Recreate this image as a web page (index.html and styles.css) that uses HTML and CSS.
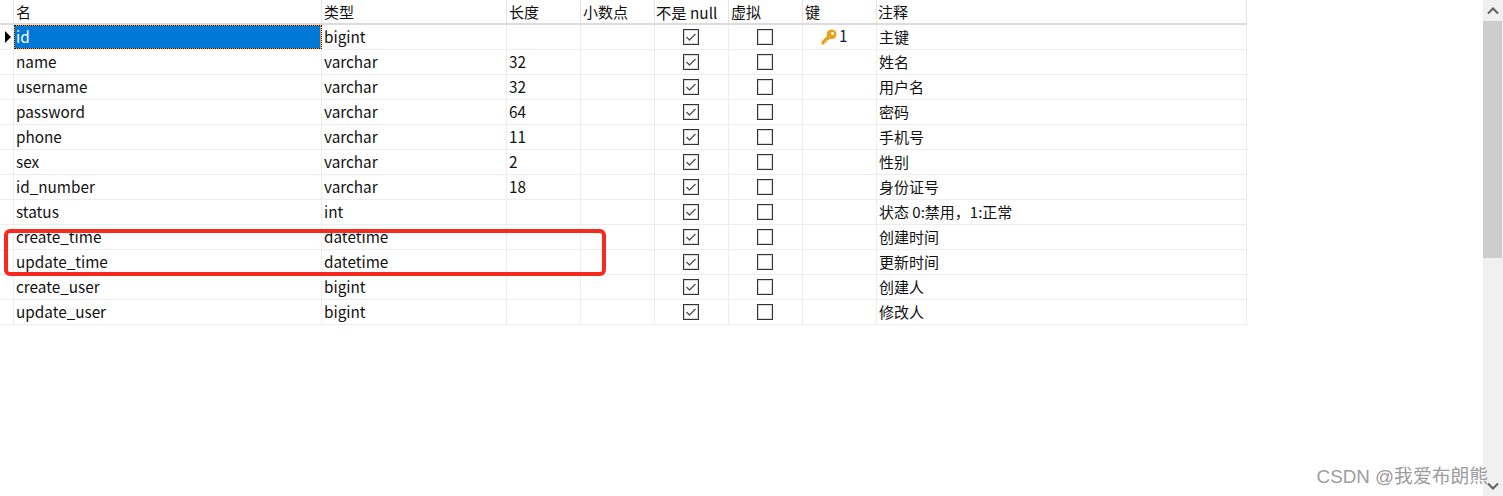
FILE: index.html
```html
<!DOCTYPE html>
<html lang="zh">
<head>
<meta charset="utf-8">
<title>表结构</title>
<link rel="stylesheet" href="styles.css">
</head>
<body>
<div class="window">
  <main class="pane">
    <div class="grid">
      <div class="row head"><div class="c"></div><div class="c">名</div><div class="c">类型</div><div class="c">长度</div><div class="c">小数点</div><div class="c nn">不是 null</div><div class="c">虚拟</div><div class="c">键</div><div class="c nt">注释</div></div>
      <div class="row"><div class="c mark"><svg width="6" height="12" viewBox="0 0 6 12"><path d="M0 0L6 6L0 12Z" fill="#000"/></svg></div><div class="c sel"><span>id</span></div><div class="c">bigint</div><div class="c"></div><div class="c"></div><div class="c mid"><span class="box on"><svg width="14" height="14" viewBox="0 0 14 14"><path d="M2.5 7L5.500 10L11.500 4" fill="none" stroke="#555" stroke-width="1.4"/></svg></span></div><div class="c mid"><span class="box"></span></div><div class="c keycell"><svg class="key" width="16" height="16" viewBox="0 0 16 16"><path d="M10.500 0.500A4.800 4.800 0 0 0 6 7L0.500 12.500V15.500H3.500V13.500H5.500V11.500H7L9 9.800A4.800 4.800 0 1 0 10.500 0.500ZM11.500 3A1.500 1.500 0 1 1 11.490 3Z" fill="#e8a21c" fill-rule="evenodd"/></svg><span>1</span></div><div class="c cn">主键</div></div>
      <div class="row"><div class="c"></div><div class="c">name</div><div class="c">varchar</div><div class="c">32</div><div class="c"></div><div class="c mid"><span class="box on"><svg width="14" height="14" viewBox="0 0 14 14"><path d="M2.5 7L5.500 10L11.500 4" fill="none" stroke="#555" stroke-width="1.4"/></svg></span></div><div class="c mid"><span class="box"></span></div><div class="c"></div><div class="c cn">姓名</div></div>
      <div class="row"><div class="c"></div><div class="c">username</div><div class="c">varchar</div><div class="c">32</div><div class="c"></div><div class="c mid"><span class="box on"><svg width="14" height="14" viewBox="0 0 14 14"><path d="M2.5 7L5.500 10L11.500 4" fill="none" stroke="#555" stroke-width="1.4"/></svg></span></div><div class="c mid"><span class="box"></span></div><div class="c"></div><div class="c cn">用户名</div></div>
      <div class="row"><div class="c"></div><div class="c">password</div><div class="c">varchar</div><div class="c">64</div><div class="c"></div><div class="c mid"><span class="box on"><svg width="14" height="14" viewBox="0 0 14 14"><path d="M2.5 7L5.500 10L11.500 4" fill="none" stroke="#555" stroke-width="1.4"/></svg></span></div><div class="c mid"><span class="box"></span></div><div class="c"></div><div class="c cn">密码</div></div>
      <div class="row"><div class="c"></div><div class="c">phone</div><div class="c">varchar</div><div class="c">11</div><div class="c"></div><div class="c mid"><span class="box on"><svg width="14" height="14" viewBox="0 0 14 14"><path d="M2.5 7L5.500 10L11.500 4" fill="none" stroke="#555" stroke-width="1.4"/></svg></span></div><div class="c mid"><span class="box"></span></div><div class="c"></div><div class="c cn">手机号</div></div>
      <div class="row"><div class="c"></div><div class="c">sex</div><div class="c">varchar</div><div class="c">2</div><div class="c"></div><div class="c mid"><span class="box on"><svg width="14" height="14" viewBox="0 0 14 14"><path d="M2.5 7L5.500 10L11.500 4" fill="none" stroke="#555" stroke-width="1.4"/></svg></span></div><div class="c mid"><span class="box"></span></div><div class="c"></div><div class="c cn">性别</div></div>
      <div class="row"><div class="c"></div><div class="c">id_number</div><div class="c">varchar</div><div class="c">18</div><div class="c"></div><div class="c mid"><span class="box on"><svg width="14" height="14" viewBox="0 0 14 14"><path d="M2.5 7L5.500 10L11.500 4" fill="none" stroke="#555" stroke-width="1.4"/></svg></span></div><div class="c mid"><span class="box"></span></div><div class="c"></div><div class="c cn">身份证号</div></div>
      <div class="row"><div class="c"></div><div class="c">status</div><div class="c">int</div><div class="c"></div><div class="c"></div><div class="c mid"><span class="box on"><svg width="14" height="14" viewBox="0 0 14 14"><path d="M2.5 7L5.500 10L11.500 4" fill="none" stroke="#555" stroke-width="1.4"/></svg></span></div><div class="c mid"><span class="box"></span></div><div class="c"></div><div class="c cn">状态 0:禁用，1:正常</div></div>
      <div class="row"><div class="c"></div><div class="c">create_time</div><div class="c">datetime</div><div class="c"></div><div class="c"></div><div class="c mid"><span class="box on"><svg width="14" height="14" viewBox="0 0 14 14"><path d="M2.5 7L5.500 10L11.500 4" fill="none" stroke="#555" stroke-width="1.4"/></svg></span></div><div class="c mid"><span class="box"></span></div><div class="c"></div><div class="c cn">创建时间</div></div>
      <div class="row"><div class="c"></div><div class="c">update_time</div><div class="c">datetime</div><div class="c"></div><div class="c"></div><div class="c mid"><span class="box on"><svg width="14" height="14" viewBox="0 0 14 14"><path d="M2.5 7L5.500 10L11.500 4" fill="none" stroke="#555" stroke-width="1.4"/></svg></span></div><div class="c mid"><span class="box"></span></div><div class="c"></div><div class="c cn">更新时间</div></div>
      <div class="row"><div class="c"></div><div class="c">create_user</div><div class="c">bigint</div><div class="c"></div><div class="c"></div><div class="c mid"><span class="box on"><svg width="14" height="14" viewBox="0 0 14 14"><path d="M2.5 7L5.500 10L11.500 4" fill="none" stroke="#555" stroke-width="1.4"/></svg></span></div><div class="c mid"><span class="box"></span></div><div class="c"></div><div class="c cn">创建人</div></div>
      <div class="row"><div class="c"></div><div class="c">update_user</div><div class="c">bigint</div><div class="c"></div><div class="c"></div><div class="c mid"><span class="box on"><svg width="14" height="14" viewBox="0 0 14 14"><path d="M2.5 7L5.500 10L11.500 4" fill="none" stroke="#555" stroke-width="1.4"/></svg></span></div><div class="c mid"><span class="box"></span></div><div class="c"></div><div class="c cn">修改人</div></div>
    </div>
    <div class="redbox"></div>
    <div class="mark-text">CSDN @我爱布朗熊</div>
  </main>
  <aside class="scroll">
    <div class="arrow"><svg width="12" height="8" viewBox="0 0 12 8"><path d="M1 6.500L6 1.500L11 6.500" fill="none" stroke="#606060" stroke-width="2"/></svg></div>
    <div class="thumb"></div>
    <div class="track"></div>
    <div class="arrow"><svg width="12" height="8" viewBox="0 0 12 8"><path d="M1 1.500L6 6.500L11 1.500" fill="none" stroke="#606060" stroke-width="2"/></svg></div>
  </aside>
</div>
</body>
</html>
```

FILE: styles.css
```css
* { box-sizing: border-box; }
html, body { margin: 0; height: 100%; background: #fff; overflow: hidden; }
body { font-family: "Noto Sans CJK SC", sans-serif; font-size: 15.3px; color: #111; }
.window { display: flex; height: 496px; width: 1503px; }
.pane { position: relative; flex: 1; }
.grid { width: 1247px; }
.row {
  display: grid;
  grid-template-columns: 14px 308px 185px 74px 74px 74px 74px 74px 370px;
  grid-template-rows: 24px;
  height: 25px;
  border-bottom: 1px solid #ededed;
  line-height: 22px;
}
.head { grid-template-rows: 23px; border-bottom: 2px solid #dcdcdc; font-size: 15px; }
.head .c { border-right: 1px solid #e4e4e4; line-height: 24px; }
.head .nn { font-size: 15.3px; padding-left: 1px; }
.head .nt { padding-left: 1px; }
.c { border-right: 1px solid #ededed; padding-left: 2px; white-space: nowrap; min-width: 0; }
.cn { font-size: 15px; line-height: 24px; }
.mid { display: flex; align-items: center; justify-content: center; padding: 0 1px 0 0; }
.mark { display: flex; align-items: center; padding-left: 5px; }
.sel { background: #0078d7; color: #fff; padding-left: 1px; outline: 1px dotted #1a1a1a; outline-offset: -1px; box-shadow: inset 0 0 0 1px #ff9a3c; }
.sel span { padding-left: 1px; }
.box { width: 16px; height: 16px; border: 1px solid #333; box-shadow: inset 0 0 0 1px #d8d8d8; display: flex; align-items: center; justify-content: center; background: #fff; }
.keycell { display: flex; align-items: flex-start; padding-left: 18px; }
.key { margin-top: 4px; }
.keycell span { margin-left: 2px; line-height: 21px; color: #123; }
.redbox {
  position: absolute;
  left: 4px; top: 229px;
  width: 602px; height: 47px;
  border: 4px solid #f8291f;
  border-radius: 6px;
}
.mark-text {
  position: absolute;
  right: -5px; top: 464px;
  font-family: "Liberation Sans", "Noto Sans CJK SC", sans-serif;
  font-size: 18.800px; line-height: 26px;
  color: #8c8c8c;
  opacity: .85;
}
.scroll { width: 20px; background: #f0f0f0; display: flex; flex-direction: column; flex: none; }
.arrow { height: 21px; display: flex; align-items: center; justify-content: center; flex: none; }
.thumb { height: 237px; background: #cdcdcd; margin-right: 1px; flex: none; }
.track { flex: 1; }
```
